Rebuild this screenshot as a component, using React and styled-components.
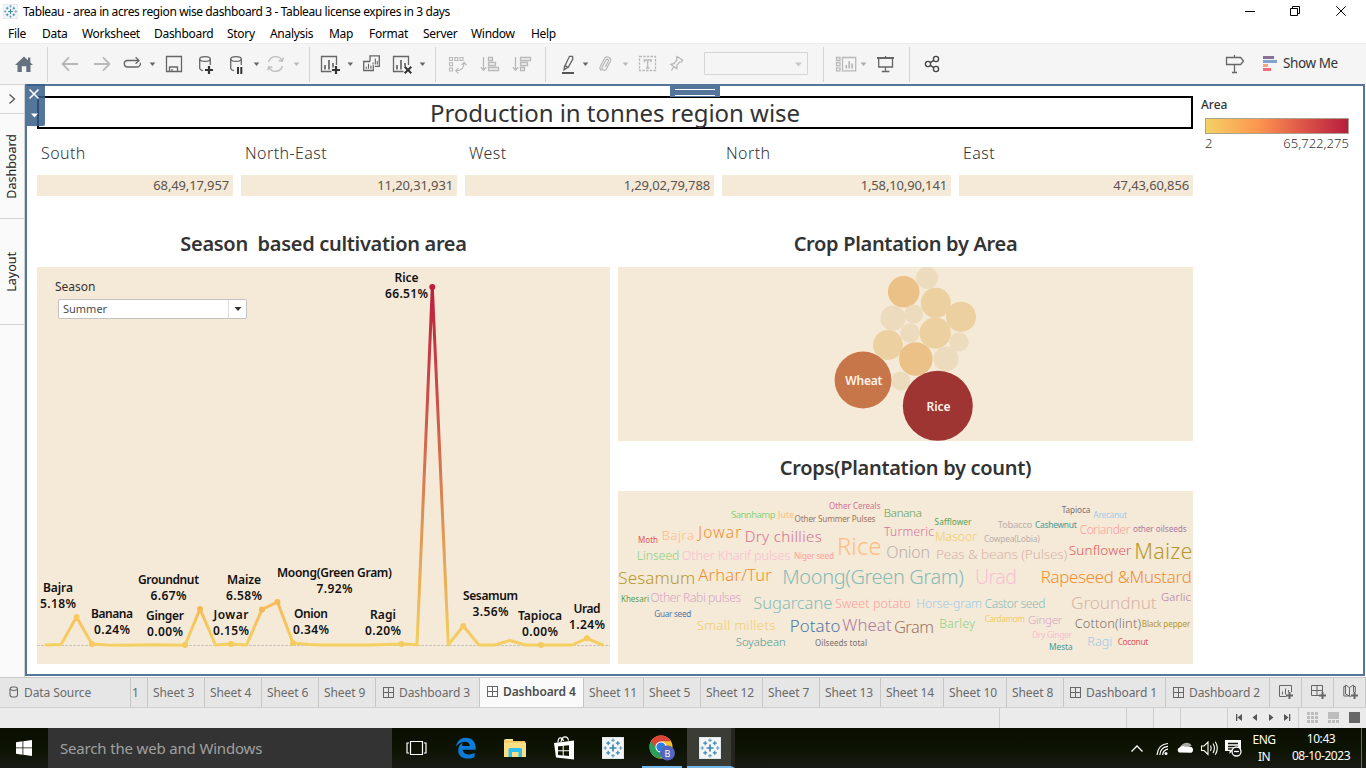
import React from 'react';
import styled, { createGlobalStyle, css } from 'styled-components';

const Global = createGlobalStyle`
  * { box-sizing: border-box; }
  html, body { margin: 0; padding: 0; overflow: hidden; }
  body { font-family: "Noto Sans", "Open Sans", sans-serif; color: #333; background: #fff; }
  svg { display: block; flex: none; }
`;

const Window = styled.div`
  width: 1366px;
  height: 768px;
  display: flex;
  flex-direction: column;
  background: #fff;
`;

/* ---------- title bar and menu ---------- */
const TitleBar = styled.header`
  height: 22px;
  display: flex;
  align-items: center;
  padding: 1px 0 0 3px;
  color: #000;
  font-size: 12px;
`;
const TitleText = styled.span`
  flex: 1;
  margin-left: 5px;
  letter-spacing: -0.39px;
  white-space: nowrap;
`;
const MenuBar = styled.nav`
  height: 21px;
  display: flex;
  align-items: center;
  padding: 2px 0 0 8px;
  color: #000;
  font-size: 12px;
`;
const MenuItem = styled.span`
  width: ${(p) => p.$w}px;
  letter-spacing: -0.3px;
  white-space: nowrap;
`;

/* ---------- toolbar ---------- */
const Toolbar = styled.div`
  height: 41px;
  display: flex;
  align-items: stretch;
  background: #f5f5f5;
  border-top: 1px solid #ededed;
`;
const Divider = styled.div`
  width: 1px;
  margin: 3px 0 2px;
  background: #d4d4d4;
`;
const Spacer = styled.div`
  flex: ${(p) => (p.$w ? 'none' : 1)};
  width: ${(p) => p.$w || 0}px;
`;
const Combo = styled.div`
  width: 104px;
  height: 23px;
  margin-top: 8px;
  border: 1px solid #d4d4d4;
  border-radius: 1px;
`;
const ShowMe = styled.span`
  width: 83px;
  padding-top: 9px;
  font-size: 13.5px;
  line-height: 20px;
  letter-spacing: -0.4px;
  color: #333;
  white-space: nowrap;
`;

/* ---------- workspace ---------- */
const Workspace = styled.div`
  height: 593px;
  display: flex;
`;
const SidePane = styled.aside`
  width: 25px;
  border-top: 1px solid #d4d4d4;
  border-right: 1px solid #d0d0d0;
  background: #fafafa;
  display: flex;
  flex-direction: column;
`;
const SideTab = styled.div`
  height: ${(p) => p.$h}px;
  display: flex;
  align-items: center;
  justify-content: center;
  border-bottom: 1px solid #d4d4d4;
  span {
    writing-mode: vertical-rl;
    transform: rotate(180deg);
    font-size: 12.5px;
    line-height: 20px;
    color: #222;
  }
`;
const Canvas = styled.main`
  width: 1340px;
  height: 592px;
  position: relative;
  border: 2px solid #54769a;
  background: #fff;
  display: flex;
  padding: 10px 0 0 10px;
`;
const CloseHandle = styled.div`
  position: absolute;
  left: 0;
  top: -2px;
  width: 18px;
  height: 42px;
  border-radius: 0 0 2px 0;
  background: rgba(54, 94, 136, 0.85);
`;
const DragHandle = styled.div`
  position: absolute;
  left: 643px;
  top: -1px;
  width: 50px;
  height: 12px;
  padding: 4px 5px 0;
  background: #54769a;
  &::before {
    content: "";
    display: block;
    height: 5px;
    border-top: 1px solid #fff;
    border-bottom: 1px solid #fff;
  }
`;
const Board = styled.section`
  width: 1156px;
`;
const BoardTitle = styled.h1`
  height: 33px;
  margin: 0;
  border: 2px solid #000;
  text-align: center;
  font-size: 24px;
  line-height: 29px;
  font-weight: 400;
  letter-spacing: -0.03px;
`;
const Kpis = styled.div`
  display: flex;
  gap: 8px;
  height: 67px;
`;
const Kpi = styled.div`
  width: ${(p) => p.$w}px;
  h3 {
    height: 46px;
    margin: 0;
    padding: 14px 0 0 4px;
    font-size: 16px;
    line-height: 21px;
    font-weight: 300;
    letter-spacing: 0.42px;
  }
  p {
    height: 21px;
    margin: 0;
    padding-right: 4px;
    background: #f5e9d8;
    color: #5a544e;
    text-align: right;
    font-size: 13px;
    line-height: 21px;
    letter-spacing: -0.14px;
  }
`;
const Sheets = styled.div`
  display: grid;
  grid-template-columns: 573px 575px;
  gap: 8px;
`;
const Heading = styled.h2`
  height: ${(p) => p.$h}px;
  margin: 0;
  padding-top: ${(p) => p.$pt}px;
  text-align: center;
  white-space: pre;
  font-size: 20px;
  line-height: 26px;
  font-weight: 600;
  letter-spacing: -0.31px;
`;
const Panel = styled.div`
  height: ${(p) => p.$h}px;
  position: relative;
  background: #f5e9d8;
`;
const Filter = styled.div`
  position: absolute;
  left: 18px;
  top: 11px;
  font-size: 12px;
  line-height: 18px;
`;
const Select = styled.div`
  width: 189px;
  height: 20px;
  margin: 3px 0 0 3px;
  padding-left: 4px;
  display: flex;
  justify-content: space-between;
  border: 1px solid #c3c3c3;
  border-radius: 2px;
  background: #fff;
  color: #4c4c4c;
  font-size: 11px;
  line-height: 18px;
  i { width: 18px; border-left: 1px solid #dcdcdc; padding: 7px 0 0 5px; }
`;
const Legend = styled.aside`
  width: 160px;
  padding-left: 8px;
  font-size: 12px;
  h4 { margin: 0; font-size: 12px; line-height: 17px; font-weight: 500; }
`;
const Ramp = styled.div`
  width: 144px;
  height: 16px;
  margin: 5px 0 0 4px;
  border: 1px solid #a9a48f;
  background: linear-gradient(90deg, #f4d166, #fd954f 37%, #e4614a 62%, #b71d3e);
`;
const RampEnds = styled.div`
  width: 144px;
  margin: 0 0 0 4px;
  display: flex;
  justify-content: space-between;
  font-size: 13px;
  line-height: 18px;
  letter-spacing: 0.05px;
  font-weight: 300;
`;

/* ---------- sheet tabs and status ---------- */
const TabStrip = styled.div`
  height: 31px;
  display: flex;
  border-top: 1px solid #c9c9c9;
  border-bottom: 1px solid #cfcfcf;
  background: #e6e6e6;
`;
const Tab = styled.div`
  width: ${(p) => p.$w}px;
  display: flex;
  align-items: center;
  padding-left: ${(p) => p.$pl ?? 5}px;
  gap: 5px;
  border-right: 1px solid #c6c6c6;
  font-size: 12px;
  letter-spacing: -0.1px;
  color: #6a6a6a;
  white-space: nowrap;
  ${(p) => p.$active && css`
    background: #fafafa;
    color: #4c4c4c;
    font-weight: 600;
    letter-spacing: -0.1px;
    padding-bottom: 2px;
  `}
`;
const StatusBar = styled.div`
  height: 20px;
  display: flex;
  background: #ebebeb;
`;
const StatusCell = styled.div`
  width: ${(p) => p.$w}px;
  flex: none;
  border-right: 1px solid ${(p) => (p.$last ? 'transparent' : '#cdcdcd')};
`;

/* ---------- taskbar ---------- */
const Taskbar = styled.footer`
  height: 40px;
  display: flex;
  background: linear-gradient(180deg, #0a0e02, #0d1403 55%, #191b14);
  color: #fff;
`;
const Start = styled.div`
  width: 48px;
  padding: 12px 0 0 16px;
`;
const Search = styled.div`
  width: 344px;
  padding-left: 12px;
  background: #333;
  color: #a0a0a0;
  font-size: 15px;
  line-height: 41px;
  letter-spacing: -0.17px;
`;
const App48 = styled.div`
  flex: none;
  width: 49px;
  display: flex;
  align-items: center;
  justify-content: center;
  ${(p) => p.$running && css`
    width: 40px;
    margin: 0 5px;
    border-bottom: 2px solid #76b9ed;
    padding-top: 2px;
  `}
  ${(p) => p.$active && css`
    width: 48px;
    margin: 0;
    padding-left: 2px;
    background: #3b3c35;
    border-right: 4px solid #25271f;
  `}
`;
const Lang = styled.div`
  width: 44px;
  padding-top: 3px;
  font-size: 12px;
  line-height: 17px;
  text-align: center;
  letter-spacing: -0.5px;
`;
const Clock = styled.div`
  width: 70px;
  padding-top: 2px;
  font-size: 12px;
  line-height: 17px;
  text-align: center;
  letter-spacing: -0.45px;
  white-space: nowrap;
`;
const ShowDesktop = styled.div`
  width: 5px;
  border-left: 1px solid #6a6a64;
`;

/* ---------- icons ---------- */
const DIM = '#b8b8b8';
const INK = '#666';

/* A toolbar glyph, drawn in window coordinates between x and x + w. */
const Tool = ({ x, w, c = INK, sw = 1.3, children }) => (
  <svg width={w} height={40} viewBox={`${x} 44 ${w} 40`} fill="none" stroke={c} strokeWidth={sw}>
    {children}
  </svg>
);
const Caret = ({ x, y = 62.5, c = INK, s = 2.8 }) => (
  <path d={`M${x - s} ${y} h${2 * s} l${-s} ${s + 0.6} z`} fill={c} stroke="none" />
);
const Plus = ({ x, y, c = '#333' }) => (
  <path d={`M${x - 4} ${y} h8 M${x} ${y - 4} v8`} stroke={c} strokeWidth={2.2} />
);

const TableauMark = ({ size, bg = '#f2f6f8' }) => (
  <svg width={size} height={size} viewBox="0 0 22 22">
    <rect width="22" height="22" fill={bg} stroke="#c9d0d4" strokeWidth="0.8" />
    <g stroke="#3f86a8" strokeWidth="1.2">
      <path d="M11 7.5v7M7.5 11h7" strokeWidth="1.7" />
      <path d="M11 1.5v3.6M9.2 3.3h3.6M11 16.9v3.6M9.2 18.7h3.6M3.3 9.2v3.6M1.5 11h3.6M18.7 9.2v3.6M16.9 11h3.6" opacity=".75" />
      <path d="M6.2 4.2v4M4.2 6.2h4M15.8 4.2v4M13.8 6.2h4M6.2 13.8v4M4.2 15.8h4M15.8 13.8v4M13.8 15.8h4" />
    </g>
  </svg>
);

const GridIcon = () => (
  <svg width="11" height="12" viewBox="0 0 11 12" fill="none" stroke="#666">
    <rect x=".5" y=".5" width="10" height="10" />
    <path d="M5.5 .5v10M.5 5.5h10" />
  </svg>
);

function ToolbarIcons() {
  return (
    <Toolbar>
      <Tool x={0} w={47}>
        <path d="M15 65 L24 56.5 L33 65 H30.5 V72 H26.3 V66.3 H21.8 V72 H17.5 V65 Z" fill="#66717f" stroke="none" />
        <path d="M28 57.5h2.3v5h-2.3z" fill="#66717f" stroke="none" />
      </Tool>
      <Divider />
      <Tool x={48} w={36} c={DIM} sw={1.8}><path d="M62.5 64H78M69 57.3L62.5 64L69 70.7" /></Tool>
      <Tool x={84} w={34} c={DIM} sw={1.8}><path d="M94 64H109.5M103 57.3L109.5 64L103 70.7" /></Tool>
      <Tool x={118} w={42}>
        <path d="M139 60.5H127a3.3 3.3 0 0 0 0 6.5H137.2a3.3 3.3 0 0 0 3.1-4.2M135.6 57.2l3.4 3.3-3.4 3.3" />
        <Caret x={152.5} />
      </Tool>
      <Tool x={160} w={30}>
        <path d="M166.5 56.5h15v15h-15zM169.5 71.5v-4.5h8v4.5M172 69v2.5" />
      </Tool>
      <Tool x={190} w={34}>
        <ellipse cx="205" cy="59" rx="5.3" ry="2.4" />
        <path d="M199.7 59V68.5q1 1.8 3.3 2.1M210.3 59V65" />
        <Plus x={209} y={70} />
      </Tool>
      <Tool x={224} w={40}>
        <ellipse cx="236" cy="59" rx="5.3" ry="2.4" />
        <path d="M230.7 59V68.5q1 1.8 3.3 2.1M241.3 59V65" />
        <path d="M238 67v7M241.3 67v7" stroke="#333" strokeWidth="2" />
        <Caret x={256.5} />
      </Tool>
      <Tool x={264} w={45} c="#bcbcbc">
        <path d="M268.6 62a7.3 7.3 0 0 1 13.4-1.6M282.4 66a7.3 7.3 0 0 1-13.4 1.6M283.3 57.6l-1 3.7-3.7-.8M267.7 70.4l1-3.7 3.7.8" />
        <Caret x={296.5} c={DIM} />
      </Tool>
      <Divider />
      <Tool x={310} w={47}>
        <path d="M331.5 71.5H321.5V56.5H336.5V65" />
        <path d="M325 65v4.5M329 60v9.5M333 63v4.5" strokeWidth="1.7" />
        <Plus x={336} y={70} />
        <Caret x={350.3} />
      </Tool>
      <Tool x={357} w={30}>
        <path d="M370 61.5V55.8h9.3v10.5h-4.5M370 61.5h-6.3v9h9.6v-5.2" />
        <path d="M373 62.5v2M375.3 58.5v6M377.3 61v3.5M366.3 66.8v2M368.5 63.8v5M370.9 65.5v3.3" strokeWidth="1.1" />
      </Tool>
      <Tool x={387} w={48}>
        <path d="M403.5 71.5H393.5V56.5H408.5V65" />
        <path d="M397 65v4.5M401 60v9.5M405 63v3.5" strokeWidth="1.7" />
        <path d="M404.7 66.7l6.6 6.6M411.3 66.7l-6.6 6.6" stroke="#333" strokeWidth="2" />
        <Caret x={422.5} />
      </Tool>
      <Divider />
      <Tool x={436} w={38} c={DIM}>
        <path d="M449.5 57.5h3v3h-3zM454.8 57.5h3v3h-3zM460 57.5h3v3h-3zM449.5 62.8h3v3h-3zM449.5 68h3v3h-3zM464 63c0 4.5-2.5 7.5-7.5 7.8M461.6 64.8l2.6-2.4 2.2 2.8M458.6 68l-3 2.8 3 2.6" strokeWidth="1.1" />
      </Tool>
      <Tool x={474} w={32} c={DIM}>
        <path d="M483.5 57v13M480.8 67.3l2.7 2.9 2.7-2.9M488.5 57.5h4v3h-4zM488.5 62.5h7v3h-7zM488.5 67.5h10v3h-10z" />
      </Tool>
      <Tool x={506} w={39} c={DIM}>
        <path d="M515.5 57v13M512.8 67.3l2.7 2.9 2.7-2.9M520.5 57.5h10v3h-10zM520.5 62.5h7v3h-7zM520.5 67.5h4v3h-4z" />
      </Tool>
      <Divider />
      <Tool x={546} w={47}>
        <path d="M569.5 56.3h3l.3 2.7-4.6 8.3-3.2-1.6zM564.6 65.8l-.6 4 3.6-2.4" />
        <path d="M562 73h12" strokeWidth="2" stroke="#555" />
        <Caret x={585.5} />
      </Tool>
      <Tool x={593} w={41} c={DIM}>
        <path d="M600.3 66.500l4.200-8a3.300 3.300 0 0 1 6 2.600l-4.200 8a2.300 2.300 0 0 1-4.200-1.800l3.900-7.300a1.300 1.300 0 0 1 2.400 1.100l-3 5.800M600.300 66.500a2.800 2.800 0 0 0 1.200 3.900" strokeWidth="1.2" />
        <Caret x={625.5} c={DIM} />
      </Tool>
      <Tool x={634} w={29} c={DIM}>
        <path d="M639.5 56.5h16v14h-16z" strokeDasharray="2.5 1.2" />
        <path d="M644.3 62.3v-2.3h6.8v2.3M647.7 60v8M646 68h3.4" />
      </Tool>
      <Tool x={663} w={41} c={DIM}>
        <path d="M677 56.5l5.8 3.6-1.6 1.8-1.6.2-2.6 3.2-.2 3.5-6-4.4 3-.8 3-3.4-.2-1.6zM674 66.5l-2.6 4" />
      </Tool>
      <Combo>
        <svg width="102" height="21" viewBox="0 0 102 21"><path d="M90 9.5h7l-3.5 4z" fill="#c8c8c8" /></svg>
      </Combo>
      <Spacer $w={15} />
      <Divider />
      <Tool x={824} w={48} c={DIM}>
        <path d="M836.5 57.5h3.5v3h-3.5zM836.5 62.7h3.5v3h-3.5zM836.5 67.9h3.5v3h-3.5zM842.5 57.5h13.2v13.3h-13.2z" />
        <path d="M846.3 65v3.5M849.2 61v7.5M852.2 63.5v5" strokeWidth="1.7" />
        <Caret x={863.5} c="#aaa" />
      </Tool>
      <Tool x={872} w={37}>
        <path d="M877 58h17" strokeWidth="2" />
        <path d="M878.7 58v9h13.8v-9M885.5 56v2M885.5 67v4.5M881.8 71.5h7.6" />
      </Tool>
      <Divider />
      <Tool x={910} w={40} c="#444">
        <circle cx="928" cy="64" r="2.6" /><circle cx="936" cy="59" r="2.6" /><circle cx="936" cy="69" r="2.6" />
        <path d="M930.3 62.6l3.4-2.2M930.3 65.4l3.4 2.2" />
      </Tool>
      <Spacer />
      <Tool x={1220} w={40}>
        <path d="M1226.5 57.5h14.2l2.8 3.5-2.8 3.5h-14.2zM1234.5 55v2.5M1234.5 64.5v8M1232 72.5h5" />
      </Tool>
      <Tool x={1260} w={23}>
        <g stroke="none">
          <path d="M1263 56h11v3h-11z" fill="#8a7096" /><path d="M1263 60h14v3h-14z" fill="#80a3cd" />
          <path d="M1263 64h5v3h-5z" fill="#f3a57c" /><path d="M1263 68h8v3h-8z" fill="#f56b7d" />
        </g>
      </Tool>
      <ShowMe>Show Me</ShowMe>
    </Toolbar>
  );
}

/* ---------- charts ---------- */
const PanelSvg = styled.svg`
  position: absolute;
  inset: 0;
  font-family: "Noto Sans", sans-serif;
`;

const LINE = [
  [46, 645], [61, 644.6], [76.5, 617], [92, 644], [107, 645], [123, 645.2], [138, 645], [154, 644.8], [169, 645], [185, 645.2],
  [200, 609], [215.5, 645], [231, 644], [246.5, 645], [262, 609.5], [277.5, 602], [293, 643], [308.5, 644.4], [324, 645],
  [339.5, 645], [355, 645], [370.5, 645], [386, 644.6], [401.5, 644], [417, 644.8],
];
const PEAK = [[417, 644.8], [432.3, 287], [448.3, 644.8]];
const TAIL = [
  [448.3, 644.8], [463.3, 626], [479, 645], [494.5, 645], [510, 640.5], [525.5, 645], [541, 645], [556.5, 645],
  [572, 645], [587, 638.3], [602.7, 645],
];
const DOTS = [[76.5, 617], [92, 644], [185, 645], [200, 609], [231, 644], [262, 609.5], [277.5, 602], [293, 643], [401.5, 644], [432.3, 287], [463.3, 626], [541, 645], [587, 638.3]];
const MARKS = [
  ['Bajra', '5.18%', 58, 592, 30], ['Banana', '0.24%', 112, 618, 42], ['Groundnut', '6.67%', 168.5, 584, 61],
  ['Ginger', '0.00%', 165, 620, 38], ['Maize', '6.58%', 244, 584, 34], ['Jowar', '0.15%', 231, 619, 35],
  ['Moong(Green Gram)', '7.92%', 334.5, 577, 115], ['Onion', '0.34%', 311, 618, 34], ['Ragi', '0.20%', 383, 619, 26],
  ['Rice', '66.51%', 406.5, 282, 24], ['Sesamum', '3.56%', 490.5, 600, 55], ['Tapioca', '0.00%', 540, 620, 44],
  ['Urad', '1.24%', 587, 613, 27],
];
const pts = (list) => list.map((p) => p.join(',')).join(' ');

function SeasonChart() {
  return (
    <PanelSvg width="573" height="397" viewBox="37 267 573 397">
      <defs>
        <linearGradient id="low" gradientUnits="userSpaceOnUse" x1="0" y1="645" x2="0" y2="602">
          <stop offset="0" stopColor="#f4d063" /><stop offset="1" stopColor="#f7b955" />
        </linearGradient>
        <linearGradient id="high" gradientUnits="userSpaceOnUse" x1="0" y1="645" x2="0" y2="287">
          <stop offset="0" stopColor="#f3cf60" /><stop offset="0.35" stopColor="#de9250" />
          <stop offset="0.7" stopColor="#cb4c48" /><stop offset="1" stopColor="#bb1f3f" />
        </linearGradient>
      </defs>
      <path d="M37 645.5H610" stroke="#c8c6c2" strokeDasharray="3 1" />
      <g fill="none" strokeWidth="3" strokeLinejoin="round" strokeLinecap="round">
        <polyline points={pts(LINE)} stroke="url(#low)" />
        <polyline points={pts(TAIL)} stroke="url(#low)" />
        <polyline points={pts(PEAK)} stroke="url(#high)" />
      </g>
      {DOTS.map(([x, y]) => <circle key={x} cx={x} cy={y} r="3" fill={y < 300 ? '#bb1f3f' : y < 612 ? '#f7b955' : '#f5cb60'} />)}
      <g fontSize="12" fontWeight="600" fill="#111" textAnchor="middle">
        {MARKS.map(([name, share, x, y, w]) => (
          <React.Fragment key={name}>
            <text x={x} y={y} textLength={w}>{name}</text>
            <text x={x} y={y + 16} textLength={share.length > 5 ? 43 : 36}>{share}</text>
          </React.Fragment>
        ))}
      </g>
    </PanelSvg>
  );
}

const FAINT = '#eddbbe', MID = '#ecd0a0', WARM = '#ebc188';
const BUBBLES = [
  [903.7, 291.8, 15.8, WARM], [927, 278, 11, FAINT], [935.8, 302.8, 15, MID], [961, 316.8, 15, MID], [893, 318, 12.6, FAINT],
  [913.8, 314, 9.4, FAINT], [910, 333, 9.8, FAINT], [935.2, 333, 15.7, MID], [959, 342, 9.7, FAINT], [888, 345, 14.9, MID],
  [915.8, 359, 16.8, WARM], [946, 359, 12.5, FAINT], [900.7, 381, 9.5, FAINT],
  [863, 380, 28.4, '#c77649', 'Wheat'], [937.8, 405.8, 35, '#9e3532', 'Rice'],
];
const BubbleChart = () => (
  <PanelSvg width="575" height="174" viewBox="618 267 575 174">
    {BUBBLES.map(([x, y, r, fill, label]) => (
      <React.Fragment key={`${x}-${y}`}>
        <circle cx={x} cy={y} r={r} fill={fill} />
        {label && <text x={x + 0.8} y={y + 5} fontSize="12" fontWeight="600" fill="#fdf3ea" textAnchor="middle" textLength={label === 'Rice' ? 24 : 37}>{label}</text>}
      </React.Fragment>
    ))}
  </PanelSvg>
);

/* word, left, baseline, width, font size, colour */
const WORDS = [
  ['Other Cereals', 829, 509, 51.5, 8, '#d37295'], ['Sannhamp', 731, 518, 44.5, 9.5, '#8cd17d'], ['Jute', 778, 518, 16, 8.5, '#ffbe7d'],
  ['Other Summer Pulses', 794.5, 522, 81, 8.2, '#9d7660'], ['Banana', 883.8, 516.8, 38, 11.5, '#59a14f'], ['Moth', 638, 543, 20, 8, '#e15759'],
  ['Bajra', 661.8, 540, 32, 12.9, '#ffbe7d'], ['Jowar', 698.3, 538, 43, 15.5, '#f28e2b'], ['Dry chillies', 744.7, 542, 77, 15, '#d37295'],
  ['Turmeric', 884, 536, 50, 12, '#d37295'], ['Linseed', 636.7, 560, 42.7, 12.2, '#8cd17d'], ['Other Kharif pulses', 681.7, 560, 108.7, 12.6, '#fabfd2'],
  ['Niger seed', 794, 559, 40, 8.2, '#ff9d9a'], ['Rice', 837, 555, 44.5, 23.5, '#ffbe7d'], ['Onion', 886.3, 558, 43.7, 16, '#bab0ac'],
  ['Sesamum', 618.3, 584, 77, 17, '#b6992d'], ['Arhar/Tur', 698.3, 581, 73.5, 16.5, '#f28e2b'], ['Moong(Green Gram)', 782.3, 584, 181.5, 20, '#86bcb6'],
  ['Khesari', 621, 602, 28, 8, '#59a14f'], ['Other Rabi pulses', 650.3, 602, 91, 12.2, '#d4a6c8'], ['Guar seed', 654.3, 617, 37, 8.2, '#4e79a7'],
  ['Sugarcane', 753.3, 609, 79, 16.5, '#86bcb6'], ['Sweet potato', 835, 608, 76, 12.5, '#ff9d9a'], ['Small millets', 696.7, 630, 78.7, 13.2, '#f1ce63'],
  ['Potato', 789.7, 632, 50.7, 16.8, '#4e79a7'], ['Wheat', 842.3, 631, 49.3, 16.8, '#b07aa1'], ['Gram', 894, 633, 40, 16.5, '#9d7660'],
  ['Soyabean', 735.7, 646, 50, 11.3, '#499894'], ['Oilseeds total', 815, 646, 52, 8, '#79706e'],
  ['Tapioca', 1061.7, 513, 28.7, 8.2, '#79706e'], ['Arecanut', 1093.3, 518, 33.7, 8.2, '#a0cbe8'], ['Safflower', 934.5, 525, 37, 8.2, '#59a14f'],
  ['Tobacco', 997.7, 528.3, 34.5, 9.5, '#bab0ac'], ['Cashewnut', 1035, 528, 41.7, 8.4, '#499894'], ['Coriander', 1079.7, 534, 50.7, 11.8, '#ff9d9a'],
  ['other oilseeds', 1133, 532, 53.7, 8.2, '#b07aa1'], ['Masoor', 935, 541, 42, 12.2, '#f1ce63'], ['Cowpea(Lobia)', 984, 542, 55.7, 8.4, '#bab0ac'],
  ['Peas & beans (Pulses)', 936, 559, 131.3, 13.5, '#d7b5a6'], ['Sunflower', 1068.7, 555, 62.7, 13.5, '#e15759'], ['Maize', 1134.3, 559, 58, 21.5, '#b6992d'],
  ['Urad', 975, 584, 42, 19.5, '#fabfd2'], ['Rapeseed &Mustard', 1040.7, 583, 151, 16.8, '#f28e2b'], ['Horse-gram', 916.3, 608, 65.7, 12.2, '#a0cbe8'],
  ['Castor seed', 984.7, 608, 60.7, 12, '#86bcb6'], ['Groundnut', 1071, 609, 85.7, 17.2, '#d7b5a6'], ['Garlic', 1161, 601, 30, 11.3, '#b07aa1'],
  ['Barley', 939.3, 628, 35.7, 12.2, '#8cd17d'], ['Cardamom', 984.7, 622, 40.3, 8.2, '#f1ce63'], ['Ginger', 1028, 624, 34.3, 11.4, '#d4a6c8'],
  ['Cotton(lint)', 1074.7, 628, 66.3, 12.8, '#79706e'], ['Black pepper', 1141.7, 627, 48.7, 8.3, '#b6992d'], ['Dry Ginger', 1032, 638, 40, 8.6, '#fabfd2'],
  ['Mesta', 1049, 650, 23.7, 8.3, '#499894'], ['Ragi', 1087.3, 646, 25, 12.7, '#a0cbe8'], ['Coconut', 1117.7, 644.5, 30.5, 8.3, '#e15759'],
];
const WordCloud = () => (
  <PanelSvg width="575" height="173" viewBox="618 491 575 173">
    {WORDS.map(([word, x, y, w, size, fill]) => (
      <text key={word} x={x} y={y} textLength={w} fontSize={size} fontWeight={size < 11 ? 400 : 300} fill={fill}>{word}</text>
    ))}
  </PanelSvg>
);

/* ---------- page ---------- */
const MENU = [['File', 34], ['Data', 40], ['Worksheet', 72], ['Dashboard', 73], ['Story', 43], ['Analysis', 59], ['Map', 40], ['Format', 54], ['Server', 48], ['Window', 60], ['Help', 40]];
const KPIS = [['South', '68,49,17,957', 196], ['North-East', '11,20,31,931', 216], ['West', '1,29,02,79,788', 249], ['North', '1,58,10,90,141', 229], ['East', '47,43,60,856', 234]];
const TABS = [
  ['1', 17, 1], ['Sheet 3', 57], ['Sheet 4', 57], ['Sheet 6', 57], ['Sheet 9', 57], ['Dashboard 3', 104, 7, true], ['Dashboard 4', 104, 7, true, true],
  ['Sheet 11', 60, 5], ['Sheet 5', 57], ['Sheet 12', 62], ['Sheet 7', 57], ['Sheet 13', 61], ['Sheet 14', 63], ['Sheet 10', 63], ['Sheet 8', 57],
  ['Dashboard 1', 102, 6, true], ['Dashboard 2', 104, 7, true],
];

function NewTabs() {
  return (
    <>
      <Tab $w={32} $pl={8}>
        <svg width="18" height="17" viewBox="0 0 18 17" fill="none" stroke="#666">
          <path d="M8 12.5H1.5V1.5H13.5V8M4.5 7.5v3M7.5 4.5v6M10.5 6v2" /><path d="M11.5 8v7M8 11.5h7" strokeWidth="2" />
        </svg>
      </Tab>
      <Tab $w={32} $pl={9}>
        <svg width="18" height="17" viewBox="0 0 18 17" fill="none" stroke="#666">
          <path d="M8 11.5H.5V1.5H11.5V8M6 1.5v10M.5 6.5h11" /><path d="M11.5 8v7M8 11.5h7" strokeWidth="2" />
        </svg>
      </Tab>
      <Tab $w={32} $pl={9}>
        <svg width="18" height="17" viewBox="0 0 18 17" fill="none" stroke="#666">
          <path d="M8 12.500L6.500 12 .8 12V2.500H2.500M2.500 10V1L6.500 3.500 10.500 1V8M6.500 3.500v8.500M2.500 10L6.500 12M10.500 2.500h1.800v5.500" /><path d="M11.5 8v7M8 11.5h7" strokeWidth="2" />
        </svg>
      </Tab>
    </>
  );
}

function Tray() {
  return (
    <svg width="117" height="40" viewBox="1126 728 117 40" fill="none" stroke="#fff" strokeWidth="1.3">
      <path d="M1132.5 751.5l5.5-5.5 5.5 5.5" />
      <g strokeWidth="1.2">
        <path d="M1158 755c.5-6.5 4.5-11 11-11.500M1160.800 755c.4-5 3.500-8.300 8.200-8.700M1163.600 755c.3-3.400 2.300-5.500 5.400-5.900" />
        <circle cx="1167" cy="753.5" r="1.5" fill="#fff" stroke="none" />
      </g>
      <g stroke="none">
        <path d="M1182 752a5 5 0 0 1 1.200-7.500 6.200 6.200 0 0 1 9.500 1z" fill="#aaa" />
        <path d="M1180 752.500a2.800 2.800 0 0 1 .5-5 5 5 0 0 1 6-.8l6 .2a3.500 3.500 0 0 1 0 5.900z" fill="#fff" />
      </g>
      <path d="M1202.500 746h2.500l4-4v12.500l-4-4h-2.500zM1211.500 745.500q1.600 2.700 0 5.500M1214 743.500q2.900 4.700 0 9.500M1216.300 741.800q4 6.400 0 12.900" strokeWidth="1.100" />
      <path d="M1226 740h16v11h-9l-2.500 3v-3H1226z" fill="#fff" stroke="none" />
      <path d="M1229 743.500h10M1229 746.500h10M1229 749h5" stroke="#11160a" />
      <circle cx="1237.500" cy="751.500" r="4.500" fill="#11160a" />
      <path d="M1235 751.500h5" />
    </svg>
  );
}

export default function App() {
  return (
    <Window>
      <Global />
      <TitleBar>
        <TableauMark size={15} />
        <TitleText>Tableau - area in acres region wise dashboard 3 - Tableau license expires in 3 days</TitleText>
        <svg width="130" height="20" viewBox="1236 0 130 20" fill="none" stroke="#000">
          <path d="M1245 9.500h10M1290.500 6.500h7v7h-7zM1292.500 6.500v-2h7v7h-2M1336.300 4.300l9.400 9.400M1345.700 4.300l-9.400 9.400" />
        </svg>
      </TitleBar>
      <MenuBar>{MENU.map(([t, w]) => <MenuItem key={t} $w={w}>{t}</MenuItem>)}</MenuBar>
      <ToolbarIcons />
      <Workspace>
        <SidePane>
          <SideTab $h={29}>
            <svg width="8" height="12" viewBox="0 0 8 12" fill="none" stroke="#555" strokeWidth="1.300"><path d="M1.500 1.500L6.500 6l-5 4.500" /></svg>
          </SideTab>
          <SideTab $h={105}><span>Dashboard</span></SideTab>
          <SideTab $h={106}><span>Layout</span></SideTab>
        </SidePane>
        <Canvas>
          <Board>
            <BoardTitle>Production in tonnes region wise</BoardTitle>
            <Kpis>
              {KPIS.map(([name, value, w]) => <Kpi key={name} $w={w}><h3>{name}</h3><p>{value}</p></Kpi>)}
            </Kpis>
            <Sheets>
              <div>
                <Heading $h={71} $pt={35}>Season  based cultivation area</Heading>
                <Panel $h={397}>
                  <SeasonChart />
                  <Filter>
                    Season
                    <Select>Summer<i><svg width="8" height="5" viewBox="0 0 8 5"><path d="M.5 0h7L4 4z" fill="#333" /></svg></i></Select>
                  </Filter>
                </Panel>
              </div>
              <div>
                <Heading $h={71} $pt={35}>Crop Plantation by Area</Heading>
                <Panel $h={174}><BubbleChart /></Panel>
                <Heading $h={50} $pt={14}>Crops(Plantation by count)</Heading>
                <Panel $h={173}><WordCloud /></Panel>
              </div>
            </Sheets>
          </Board>
          <Legend>
            <h4>Area</h4>
            <Ramp />
            <RampEnds><span>2</span><span>65,722,275</span></RampEnds>
          </Legend>
          <CloseHandle>
            <svg width="18" height="42" viewBox="0 0 18 42">
              <path d="M2.500 5.500l9 9M11.500 5.500l-9 9" stroke="#fff" strokeWidth="1.600" />
              <path d="M4 29.500h7l-3.500 4z" fill="#fff" />
            </svg>
          </CloseHandle>
          <DragHandle />
        </Canvas>
      </Workspace>
      <TabStrip>
        <Tab $w={131} $pl={9}>
          <svg width="10" height="13" viewBox="0 0 10 13" fill="none" stroke="#666" strokeWidth="1.100">
            <rect x="1" y="1" width="7.500" height="10" rx="2.500" /><path d="M1 3.500q3.700 2 7.500 0" />
          </svg>
          Data Source
        </Tab>
        {TABS.map(([t, w, pl, grid, active]) => (
          <Tab key={t} $w={w} $pl={pl} $active={active}>{grid && <GridIcon />}{t}</Tab>
        ))}
        <NewTabs />
      </TabStrip>
      <StatusBar>
        <StatusCell $w={1000} /><StatusCell $w={127} /><StatusCell $w={27} /><StatusCell $w={27} /><StatusCell $w={47} />
        <StatusCell $w={71}>
          <svg width="70" height="20" viewBox="1228 708 70 20" fill="#555">
            <path d="M1236 714h1.300v7h-1.300zM1242 714v7l-4.500-3.500zM1257 714v7l-4.500-3.500zM1269 714v7l4.500-3.500zM1284 714v7l4.500-3.500zM1289 714h1.300v7h-1.300z" />
          </svg>
        </StatusCell>
        <StatusCell $w={67} $last>
          <svg width="66" height="20" viewBox="1299 708 66 20" fill="#bdbdbd">
            <path d="M1307 712h3v3h-3zM1311 712h3v3h-3zM1315 712h3v3h-3zM1307 716h3v3h-3zM1311 716h3v3h-3zM1315 716h3v3h-3zM1307 720h3v3h-3zM1311 720h3v3h-3zM1315 720h3v3h-3zM1328 712h11v7h-11zM1328 720h3v3h-3zM1332 720h3v3h-3zM1336 720h3v3h-3z" />
            <path d="M1349 712h11v11h-11z" fill="#666" />
          </svg>
        </StatusCell>
      </StatusBar>
      <Taskbar>
        <Start>
          <svg width="16" height="16" viewBox="0 0 16 16" fill="#fff"><path d="M0 2.200L6.500 1.300V7.500H0zM7.300 1.200L16 0V7.500H7.300zM0 8.300H6.500V14.700L0 13.800zM7.300 8.300H16V16L7.300 14.800z" /></svg>
        </Start>
        <Search>Search the web and Windows</Search>
        <App48>
          <svg width="22" height="16" viewBox="0 0 22 16" fill="none" stroke="#fff" strokeWidth="1.200"><path d="M4.500 1.500h12v13h-12zM3 3H1v10h2M18 3h2v10h-2" /></svg>
        </App48>
        <App48>
          <svg width="22" height="22" viewBox="0 0 22 22">
            <path d="M1 9.600C1.900 4.200 5.700.8 11 .8c5.700 0 9.600 4 9.600 9.500v2.500H7.700c.3 3.200 2.700 4.600 5.900 4.600 2.200 0 4.300-.6 6-1.600v4.300c-1.900 1-4.200 1.500-6.700 1.500-5.800 0-9.700-3.100-9.700-8.400 0-3.100 1.700-6 4.800-7.400-.7 1.100-.9 2.100-.9 3.100h7.600c0-2.400-1.500-4.100-4.500-4.100-3.600 0-6.900 1.800-9.200 4.800z" fill="#0c7cd8" />
          </svg>
        </App48>
        <App48>
          <svg width="22" height="20" viewBox="0 0 22 20">
            <path d="M0 1.500h8l1.500 1.500H21V19H0z" fill="#f0c75a" /><path d="M1.500 1h7.500v1.500H1.500z" fill="#fbe9a6" />
            <path d="M0 4.500h22V19H0z" fill="#fbdf86" /><path d="M4.500 19v-7.500q0-1.500 1.500-1.500h10.500q1.500 0 1.500 1.500V19h-3.500v-5h-6.500v5z" fill="#2fc0f0" />
          </svg>
        </App48>
        <App48>
          <svg width="22" height="24" viewBox="0 0 22 24">
            <path d="M1 7L21 4.500V23.500L3 21.500z" fill="#fff" /><path d="M5 6.500C5 .5 9 .5 10.500 5M8 6C9-.5 14.500-.5 15.500 4.500" fill="none" stroke="#fff" strokeWidth="1.200" />
            <path d="M5 10.300l4.700-.4v4.300H5zM10.700 9.800l5.300-.5v4.900h-5.300zM5 15.200h4.700v4.200L5 19zM10.700 15.200H16v4.900l-5.300-.5z" fill="#111706" />
          </svg>
        </App48>
        <App48><TableauMark size={22} /></App48>
        <App48 $running>
          <svg width="28" height="26" viewBox="649 735 28 26">
            <circle cx="662" cy="747" r="11.500" fill="#f5c22b" />
            <path d="M662 747L652 741.300A11.500 11.500 0 0 0 661 758.500L667 750z" fill="#28a057" />
            <path d="M662 741.300h10a11.500 11.500 0 0 0-20 0l5 7z" fill="#dd4437" />
            <circle cx="662" cy="747" r="5.600" fill="#fff" /><circle cx="662" cy="747" r="4.600" fill="#2f7de0" />
            <circle cx="668.500" cy="753" r="7.500" fill="#5565bd" />
            <text x="668.500" y="756.500" fontSize="9" fontFamily="Noto Sans" fill="#fff" textAnchor="middle">B</text>
          </svg>
        </App48>
        <App48 $running $active><TableauMark size={22} /></App48>
        <Spacer />
        <Tray />
        <Lang>ENG<br />IN</Lang>
        <Clock>10:43<br />08-10-2023</Clock>
        <Spacer $w={5} />
        <ShowDesktop />
      </Taskbar>
    </Window>
  );
}
